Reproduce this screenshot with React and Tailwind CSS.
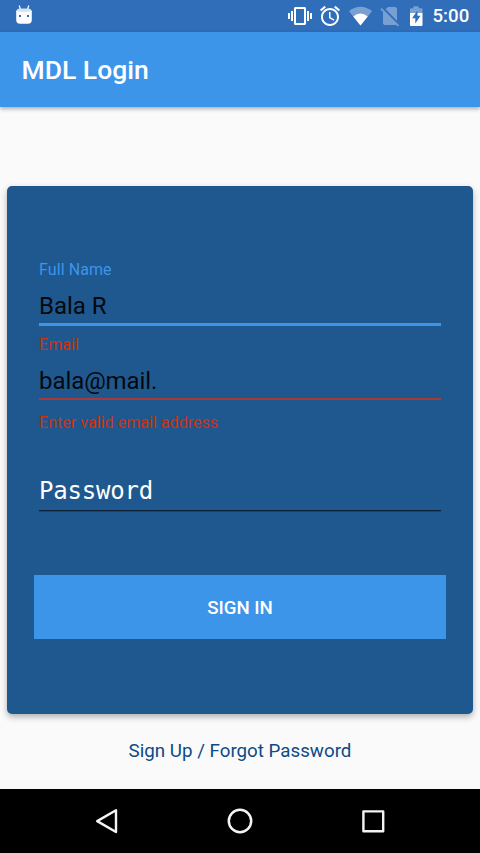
function StatusBar() {
  return (
    <div className="flex h-8 shrink-0 items-start bg-[#306eba] text-white">
      <svg className="ml-3 mt-1 h-6 w-6 shrink-0" viewBox="0 0 24 24">
        <path d="M7.2 1.5 8.4 5M16.8 1.5 15.6 5" stroke="#fff" strokeWidth="1.2" fill="none" />
        <path d="M4.200 7Q5 4.600 8 4.600H16Q19 4.600 19.800 7V8H4.200Z" fill="#fff" opacity=".8" />
        <path d="M4.2 7Q12 9 19.8 7V16Q19.8 19.700 16 19.700H8Q4.2 19.700 4.2 16Z" fill="#fff" />
        <rect x="7" y="11" width="2" height="2" fill="#306eba" />
        <rect x="15" y="11" width="2" height="2" fill="#306eba" />
      </svg>
      <div className="flex-1" />
      <svg className="mt-1 h-6 w-6 shrink-0" viewBox="0 0 24 24" fill="currentColor">
        <path d="M0 15h2V9H0v6zm3 2h2V7H3v10zm19-8v6h2V9h-2zm-3 8h2V7h-2v10zM16.500 3h-9C6.670 3 6 3.670 6 4.500v15c0 .83.67 1.500 1.500 1.500h9c.83 0 1.500-.67 1.500-1.500v-15c0-.83-.67-1.500-1.500-1.500zM16 19H8V5h8v14z" />
      </svg>
      <svg className="ml-[6px] mt-1 h-6 w-6 shrink-0" viewBox="0 0 24 24" fill="currentColor">
        <path d="M22 5.720l-4.600-3.860-1.290 1.530 4.600 3.860L22 5.720zM7.880 3.390L6.600 1.860 2 5.710l1.290 1.530 4.590-3.850zM12.500 8H11v6l4.750 2.850.75-1.230-4-2.370V8zM12 4c-4.970 0-9 4.030-9 9s4.020 9 9 9c4.970 0 9-4.030 9-9s-4.030-9-9-9zm0 16c-3.870 0-7-3.130-7-7s3.130-7 7-7 7 3.130 7 7-3.130 7-7 7z" />
      </svg>
      <svg className="ml-[6px] mt-1 h-6 w-6 shrink-0" viewBox="0 0 24 24" fill="currentColor">
        <path d="M12.500 21.500 24 7.200Q19 2.700 12.500 2.700T1 7.200Z" opacity=".35" />
        <path d="M12.500 21.500 19.700 12.500Q16.500 9.400 12.500 9.400T5.300 12.500Z" />
      </svg>
      <svg className="ml-[6px] mt-1 h-6 w-6 shrink-0" viewBox="0 0 24 24" fill="currentColor">
        <g opacity=".35">
          <path d="M19 5c0-1.100-.9-2-2-2h-7L7.660 5.340 19 16.680V5zM3.650 3.880L2.380 5.150 5 7.770V19c0 1.100.9 2 2 2h10.010c.35 0 .67-.1.960-.26l1.880 1.880 1.270-1.270L3.650 3.880z" />
        </g>
      </svg>
      <svg className="ml-[2px] mt-1 h-6 w-6 shrink-0" viewBox="0 0 24 24">
        <path d="M18.500 5.500C18.500 4.600 18 4.200 17.200 4.200H14.500V2.300H9.500V4.200H7.300C6.500 4.200 6 4.600 6 5.500V9H18.500Z" fill="#fff" opacity=".35" />
        <path d="M6 9H18.500V20.700C18.500 21.500 18 22 17.200 22H7.300C6.500 22 6 21.500 6 20.700Z" fill="#fff" />
        <path d="M13.500 6.500 8 14.200H11.300V19.500L16.500 11.800H13.500Z" fill="#306eba" />
      </svg>
      <span className="ml-[4.500px] mr-[11.500px] w-9 whitespace-nowrap text-[18.67px] font-medium leading-8">5:00</span>
    </div>
  );
}

function NavBar() {
  return (
    <div className="flex h-16 shrink-0 items-center bg-black pl-[91px]">
      <svg className="h-8 w-8" viewBox="0 0 32 32" fill="none" stroke="#f4f4f4" strokeWidth="2.4" strokeLinejoin="round">
        <path d="M25 5.200V27L6.200 16.100Z" />
      </svg>
      <svg className="ml-[101px] h-8 w-8" viewBox="0 0 32 32" fill="none" stroke="#f4f4f4" strokeWidth="2.500">
        <circle cx="16" cy="16" r="11.200" />
      </svg>
      <svg className="ml-[101px] h-8 w-8" viewBox="0 0 32 32" fill="none" stroke="#f4f4f4" strokeWidth="2.400" strokeLinejoin="round">
        <rect x="6.400" y="6.400" width="19.800" height="19.800" />
      </svg>
    </div>
  );
}

export default function App() {
  return (
    <div className="flex h-[853px] w-[480px] flex-col overflow-hidden bg-[#fafafa] font-['Roboto',sans-serif]">
      <StatusBar />
      <header className="h-[74.5px] shrink-0 bg-[#3d95ea] pl-[21.500px] pt-[18px] text-[26.500px] font-medium leading-10 text-white shadow-[0_2px_4px_rgba(0,0,0,0.3)]">
        MDL Login
      </header>
      <main className="flex flex-1 flex-col px-[7px] pt-[79px]">
        <section className="h-[528.500px] rounded-[5px] bg-[#1e588e] px-[27px] pt-[74px] shadow-[0_3px_6px_rgba(0,0,0,0.3)]">
          <div className="mx-[5px] flex flex-col">
            <label className="h-5 text-base leading-5 tracking-[0.09px] text-[#3d95ea]">Full Name</label>
            <div className="mt-[10px] h-9 border-b-[3px] border-[#3d95ea] text-2xl leading-8 tracking-[-0.04px] text-[#05090d]">Bala R</div>
            <label className="mt-[9px] h-5 text-base leading-5 tracking-[0.09px] text-[#d0300f]">Email</label>
            <div className="mt-[10px] h-[35px] border-b-2 border-[#a63a38] text-2xl leading-8 tracking-[-0.07px] text-[#05090d]">bala@mail.</div>
            <div className="mt-[13.500px] h-5 text-base leading-5 tracking-[0.04px] text-[#d0300f]">Enter valid email address</div>
            <div className="mt-[41.500px] h-9 border-b border-[#0d2238] font-['DejaVu_Sans_Mono',monospace] text-2xl leading-8 tracking-[-0.2px] text-white shadow-[0_1px_0_#184570]">Password</div>
          </div>
          <button className="mt-16 flex h-16 w-full items-center justify-center bg-[#3d95ea] pt-[2px] text-[18.67px] font-medium text-white">
            SIGN IN
          </button>
        </section>
        <a className="mt-[23px] text-center text-[18.75px] leading-7 text-[#0d4a86]">Sign Up / Forgot Password</a>
      </main>
      <NavBar />
    </div>
  );
}
